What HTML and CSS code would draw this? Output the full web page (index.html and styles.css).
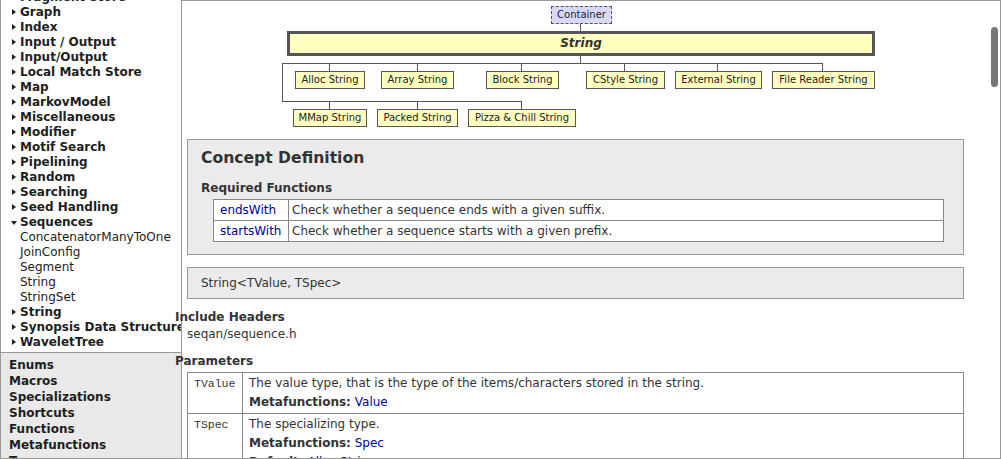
FILE: index.html
```html
<!DOCTYPE html>
<html lang="en">
<head>
<meta charset="utf-8">
<title>String - SeqAn</title>
<link rel="stylesheet" href="styles.css">
</head>
<body>
<div class="window">
  <aside class="sidebar">
    <nav class="tree">
      <ul class="tree-list">
        <li class="group closed">Fragment Store</li>
        <li class="group closed">Graph</li>
        <li class="group closed">Index</li>
        <li class="group closed">Input / Output</li>
        <li class="group closed">Input/Output</li>
        <li class="group closed">Local Match Store</li>
        <li class="group closed">Map</li>
        <li class="group closed">MarkovModel</li>
        <li class="group closed">Miscellaneous</li>
        <li class="group closed">Modifier</li>
        <li class="group closed">Motif Search</li>
        <li class="group closed">Pipelining</li>
        <li class="group closed">Random</li>
        <li class="group closed">Searching</li>
        <li class="group closed">Seed Handling</li>
        <li class="group open">Sequences</li>
        <li class="leaf">ConcatenatorManyToOne</li>
        <li class="leaf">JoinConfig</li>
        <li class="leaf">Segment</li>
        <li class="leaf">String</li>
        <li class="leaf">StringSet</li>
        <li class="group closed">String</li>
        <li class="group closed">Synopsis Data Structure</li>
        <li class="group closed">WaveletTree</li>
      </ul>
    </nav>
    <nav class="kinds">
      <ul class="kind-list">
        <li>Enums</li>
        <li>Macros</li>
        <li>Specializations</li>
        <li>Shortcuts</li>
        <li>Functions</li>
        <li>Metafunctions</li>
        <li>Tags</li>
      </ul>
    </nav>
  </aside>

  <main class="main">
    <div class="diagram">
      <svg class="wires" width="700" height="138" viewBox="0 0 700 138">
        <g stroke="#555" stroke-width="1" fill="none">
          <line x1="398.5" y1="22" x2="398.5" y2="30"/>
          <line x1="398.5" y1="54" x2="398.5" y2="62"/>
          <line x1="100" y1="62.5" x2="641" y2="62.5"/>
          <line x1="147.5" y1="62" x2="147.5" y2="70"/>
          <line x1="235.5" y1="62" x2="235.5" y2="70"/>
          <line x1="339.5" y1="62" x2="339.5" y2="70"/>
          <line x1="442.5" y1="62" x2="442.5" y2="70"/>
          <line x1="535.5" y1="62" x2="535.5" y2="70"/>
          <line x1="640.5" y1="62" x2="640.5" y2="70"/>
          <line x1="100.5" y1="62" x2="100.5" y2="101"/>
          <line x1="100" y1="100.5" x2="340" y2="100.5"/>
          <line x1="147.5" y1="100" x2="147.5" y2="108"/>
          <line x1="235.5" y1="100" x2="235.5" y2="108"/>
          <line x1="339.5" y1="100" x2="339.5" y2="108"/>
        </g>
      </svg>
      <div class="node parent n-container">Container</div>
      <div class="node self n-string">String</div>
      <div class="node child n-alloc">Alloc String</div>
      <div class="node child n-array">Array String</div>
      <div class="node child n-block">Block String</div>
      <div class="node child n-cstyle">CStyle String</div>
      <div class="node child n-external">External String</div>
      <div class="node child n-file">File Reader String</div>
      <div class="node child n-mmap">MMap String</div>
      <div class="node child n-packed">Packed String</div>
      <div class="node child n-pizza">Pizza &amp; Chill String</div>
    </div>

    <section class="box concept">
      <h2 class="box-title">Concept Definition</h2>
      <h3 class="sub-title">Required Functions</h3>
      <table class="func-table">
        <tr><td class="fname"><a href="#">endsWith</a></td><td class="fdesc">Check whether a sequence ends with a given suffix.</td></tr>
        <tr><td class="fname"><a href="#">startsWith</a></td><td class="fdesc">Check whether a sequence starts with a given prefix.</td></tr>
      </table>
    </section>

    <section class="box signature">String&lt;TValue, TSpec&gt;</section>

    <h3 class="section-title include-title">Include Headers</h3>
    <p class="include">seqan/sequence.h</p>

    <h3 class="section-title params-title">Parameters</h3>
    <table class="param-table">
      <tr>
        <td class="pname"><code>TValue</code></td>
        <td class="pdesc">The value type, that is the type of the items/characters stored in the string.<br><b>Metafunctions:</b> <a href="#">Value</a></td>
      </tr>
      <tr>
        <td class="pname"><code>TSpec</code></td>
        <td class="pdesc">The specializing type.<br><b>Metafunctions:</b> <a href="#">Spec</a><br><b>Default:</b> <a href="#">Alloc String</a></td>
      </tr>
    </table>

    <div class="scroll-thumb"></div>
  </main>
</div>
</body>
</html>
```

FILE: styles.css
```css
* { box-sizing: border-box; }

html, body { margin: 0; padding: 0; }

body {
  width: 1001px;
  height: 459px;
  overflow: hidden;
  background: #fff;
  font-family: "DejaVu Sans", Verdana, sans-serif;
  font-size: 12px;
  color: #333;
}

a { color: #000099; text-decoration: none; }

.window {
  display: flex;
  width: 1001px;
  height: 459px;
  border: 1px solid #999;
  border-top: 0;
}

/* ---------- sidebar ---------- */
.sidebar {
  width: 181px;
  flex: none;
  display: flex;
  flex-direction: column;
  border-right: 1px solid #999;
}

.tree {
  height: 352px;
  flex: none;
  overflow: hidden;
  background: #fff;
}

.tree-list {
  list-style: none;
  margin: -10px 0 0 0;
  padding: 0;
}

.tree-list li {
  position: relative;
  padding-left: 19px;
  line-height: 15px;
  white-space: nowrap;
  color: #1e1e1e;
}

.tree-list .group { font-weight: bold; }
.tree-list .leaf { font-weight: normal; color: #222; }

.tree-list .closed::before {
  content: "";
  position: absolute;
  left: 11px;
  top: 4px;
  border-left: 4px solid #222;
  border-top: 3.5px solid transparent;
  border-bottom: 3.5px solid transparent;
}

.tree-list .open::before {
  content: "";
  position: absolute;
  left: 10px;
  top: 6px;
  border-top: 4px solid #222;
  border-left: 3px solid transparent;
  border-right: 3px solid transparent;
}

.kinds {
  flex: 1;
  overflow: hidden;
  background: #e9e9e9;
  border-top: 1px solid #999;
  padding: 4px 0 0 8px;
}

.kind-list {
  list-style: none;
  margin: 0;
  padding: 0;
}

.kind-list li {
  font-weight: bold;
  line-height: 16px;
  color: #1e1e1e;
}

/* ---------- main ---------- */
.main {
  flex: 1;
  position: relative;
  border-top: 1px solid #999;
  overflow-x: visible;
  overflow-y: clip;
  min-width: 0;
}

.diagram {
  position: relative;
  height: 138px;
}

.wires {
  position: absolute;
  left: 0;
  top: 0;
}

.node {
  position: absolute;
  height: 18px;
  border: 1px solid #555;
  background: #ffffc0;
  color: #222;
  font-size: 10px;
  line-height: 16px;
  text-align: center;
  white-space: nowrap;
}

.node.parent {
  border-style: dashed;
  background: #d8d8ff;
}

.node.self {
  border-width: 3px;
  font-size: 12px;
  font-weight: bold;
  font-style: italic;
  line-height: 19px;
  color: #333;
}

.n-container { left: 369px; top: 5px; width: 61px; }
.n-string    { left: 105px; top: 30px; width: 588px; height: 25px; }
.n-alloc     { left: 113px; top: 70px; width: 70px; }
.n-array     { left: 199px; top: 70px; width: 73px; }
.n-block     { left: 304px; top: 70px; width: 73px; }
.n-cstyle    { left: 404px; top: 70px; width: 79px; }
.n-external  { left: 493px; top: 70px; width: 87px; }
.n-file      { left: 590px; top: 70px; width: 103px; }
.n-mmap      { left: 111px; top: 108px; width: 74px; }
.n-packed    { left: 195px; top: 108px; width: 81px; }
.n-pizza     { left: 286px; top: 108px; width: 108px; }

.box {
  margin: 0 36px 0 5px;
  background: #ebebeb;
  border: 1px solid #999;
}

.concept { padding: 8px 13px 12px; }

.box-title {
  margin: 0;
  font-size: 15.6px;
  line-height: 20px;
  font-weight: bold;
  color: #333;
}

.sub-title {
  margin: 12px 0 0 0;
  font-size: 12px;
  line-height: 16px;
  font-weight: bold;
  color: #333;
}

.func-table {
  margin: 3px 0 0 12px;
  width: calc(100% - 18px);
  border-collapse: collapse;
  background: #fff;
}

.func-table td {
  border: 1px solid #888;
  height: 21px;
  line-height: 18px;
  padding: 0 3px;
  white-space: nowrap;
}

.func-table .fname { width: 75px; padding: 0 6px; }

.signature {
  margin-top: 12px;
  padding: 8px 13px;
  line-height: 14px;
}

.section-title {
  margin: 11px 0 0 -7px;
  font-size: 12px;
  line-height: 15px;
  font-weight: bold;
  color: #333;
  white-space: nowrap;
}

.include {
  margin: 2px 0 0 5px;
  line-height: 15px;
}

.params-title { margin-top: 12px; }

.param-table {
  margin: 3px 0 0 5px;
  width: 777px;
  border-collapse: collapse;
}

.param-table td {
  border: 1px solid #888;
  vertical-align: top;
  padding: 1px 6px 1px;
  line-height: 19px;
}

.param-table .pname { width: 55px; }

.param-table code {
  font-family: "Liberation Mono", "Courier New", monospace;
  font-size: 11.5px;
  color: #333;
}

.param-table b { color: #333; }

.scroll-thumb {
  position: absolute;
  left: 809px;
  top: 26px;
  width: 7px;
  height: 60px;
  border-radius: 4px;
  background: #777;
}
```
